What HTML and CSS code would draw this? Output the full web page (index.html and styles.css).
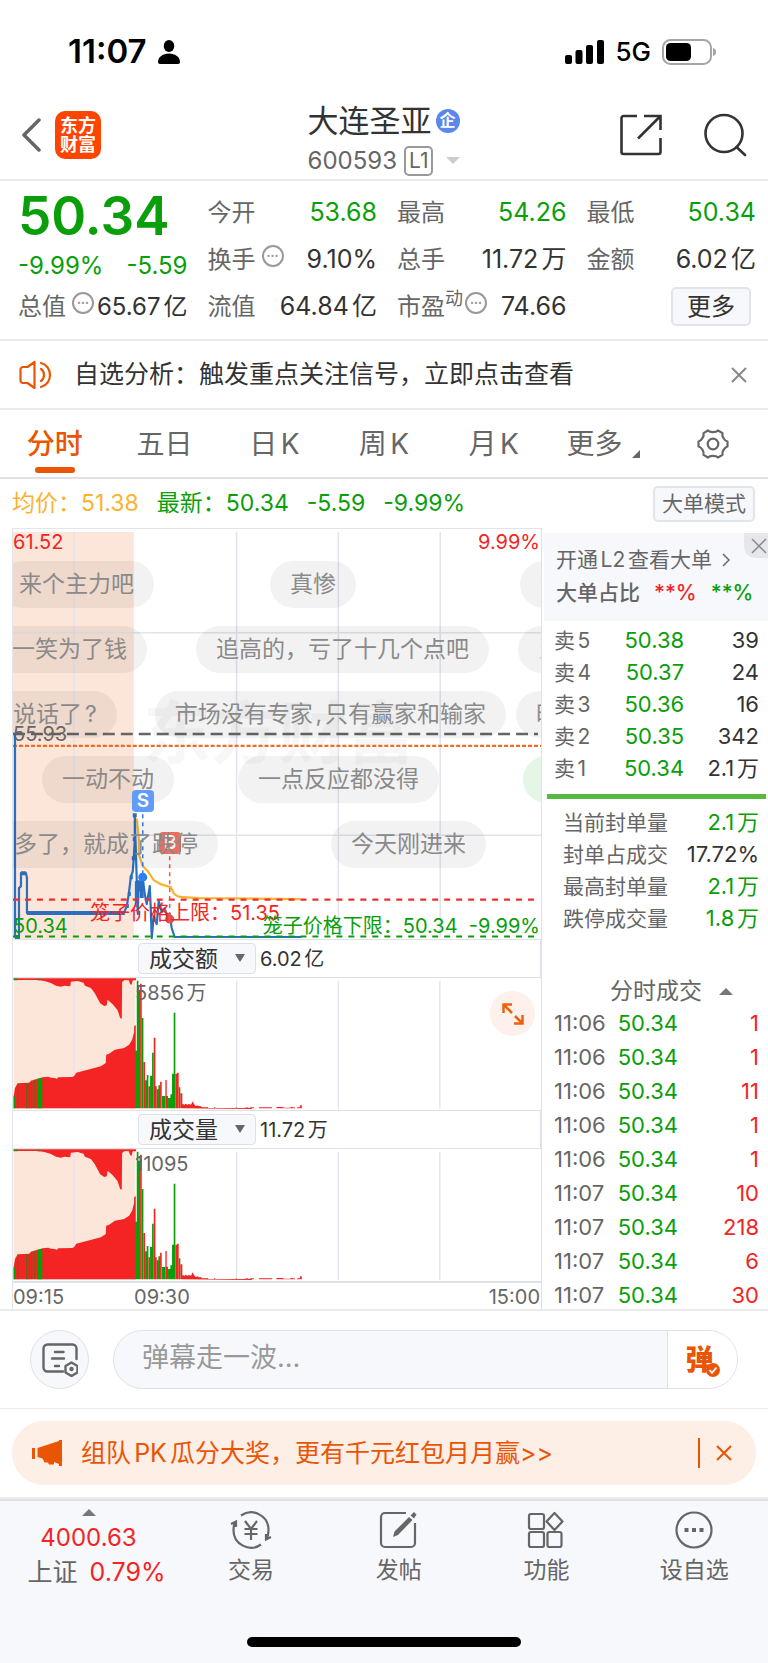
FILE: index.html
```html
<!DOCTYPE html>
<html lang="zh-CN">
<head>
    <meta charset="UTF-8">
    <meta name="viewport" content="width=device-width, initial-scale=1.0">
    <title>大连圣亚 600593</title>
    <link rel="stylesheet" href="styles.css">
</head>
<body>
    <div class="status-bar">
        <div class="status-left">
            <span class="clock">11:07</span>
            <svg width="22" height="24" viewBox="0 0 22 24"><ellipse cx="11" cy="6" rx="5.3" ry="6"/><path d="M0 22c0-5 5-8.5 11-8.5S22 17 22 22c0 1.200-.8 2-2 2H2c-1.200 0-2-.8-2-2z"/></svg>
        </div>
        <div class="status-right">
            <svg width="39" height="24" viewBox="0 0 39 24"><rect y="15" width="7" height="9" rx="2"/><rect x="10.500" y="10" width="7" height="14" rx="2"/><rect x="21" y="5" width="7" height="19" rx="2"/><rect x="32" width="7" height="24" rx="2"/></svg>
            <span class="network">5G</span>
            <svg width="54" height="26" viewBox="0 0 54 26"><rect x="1" y="1" width="48" height="24" rx="7.500" fill="none" stroke="#a6a6a6" stroke-width="2"/><rect x="4" y="4" width="25" height="18" rx="4.500"/><path d="M51 9c2 .6 3 2 3 4s-1 3.400-3 4z" fill="#a6a6a6"/></svg>
        </div>
    </div>

    <header class="header">
        <div class="header-side">
            <button class="icon-btn" aria-label="返回"><svg width="20" height="34" viewBox="0 0 20 34"><path d="M18 2 3 17l15 15" fill="none" stroke="#666" stroke-width="3.500" stroke-linecap="round" stroke-linejoin="round"/></svg></button>
            <a class="logo" href="#">东方<br>财富</a>
        </div>
        <div class="stock">
            <h1>大连圣亚<span class="badge">企</span></h1>
            <p>600593<span class="level">L1</span><i class="caret"></i></p>
        </div>
        <div class="header-side header-actions">
            <button class="icon-btn" aria-label="分享"><svg width="44" height="44" viewBox="0 0 44 44" fill="none" stroke="#333" stroke-width="2.600"><path d="M18 3H4.500A2 2 0 0 0 2.500 5v34a2 2 0 0 0 2 2h35a2 2 0 0 0 2-2V25M25 3h16.500v14M41 3.500 19 25.500"/></svg></button>
            <button class="icon-btn" aria-label="搜索"><svg width="44" height="44" viewBox="0 0 44 44" fill="none" stroke="#333" stroke-width="2.600"><circle cx="21" cy="20.500" r="18.500"/><path d="m33.500 34 8.500 8" stroke-linecap="round"/></svg></button>
        </div>
    </header>

    <section class="quote">
        <div class="price down">50.34</div>
        <div class="item"><span>今开</span><b class="down">53.68</b></div>
        <div class="item"><span>最高</span><b class="down">54.26</b></div>
        <div class="item"><span>最低</span><b class="down">50.34</b></div>
        <div class="item own change"><b class="down">-9.99%</b><b class="down">-5.59</b></div>
        <div class="item"><span>换手<i class="dots">•••</i></span><b>9.10%</b></div>
        <div class="item"><span>总手</span><b>11.72万</b></div>
        <div class="item"><span>金额</span><b>6.02亿</b></div>
        <div class="item own"><span>总值<i class="dots">•••</i></span><b>65.67亿</b></div>
        <div class="item"><span>流值</span><b>64.84亿</b></div>
        <div class="item"><span>市盈<sup>动</sup><i class="dots">•••</i></span><b>74.66</b></div>
        <div class="item item-more"><button class="more">更多</button></div>
    </section>

    <div class="notice">
        <svg width="34" height="30" viewBox="0 0 34 30" fill="none" stroke="#ea5504" stroke-width="2.200" stroke-linejoin="round" stroke-linecap="round"><path d="M15.500 2v26l-7-5H4a2.500 2.500 0 0 1-2.500-2.500v-11A2.500 2.500 0 0 1 4 7h4.500zM22 9c4 2.500 4 9.500 0 12M22 3c12 3 12 21 0 24"/></svg>
        <p>自选分析：触发重点关注信号，立即点击查看</p>
        <button class="icon-btn" aria-label="关闭"><svg width="16" height="16" viewBox="0 0 16 16"><path d="m1 1 14 14M15 1 1 15" stroke="#888" stroke-width="2"/></svg></button>
    </div>

    <nav class="tabs">
        <a class="active" href="#">分时</a>
        <a href="#">五日</a>
        <a href="#">日K</a>
        <a href="#">周K</a>
        <a href="#">月K</a>
        <a class="tab-more" href="#">更多</a>
        <a href="#" aria-label="设置"><svg width="32" height="32" viewBox="0 0 32 32" fill="none" stroke="#666" stroke-width="2.200" stroke-linejoin="round"><path d="M11 2.500c2 2.200 8 2.200 10 0l4.500 2.600c-.9 3 2 7.900 5 8.400v5c-3 .6-5.900 5.500-5 8.400L21 29.500c-2-2.200-8-2.200-10 0l-4.500-2.600c.9-3-2-7.900-5-8.400v-5c3-.6 5.900-5.500 5-8.400z"/><circle cx="16" cy="16" r="5.300"/></svg></a>
    </nav>

    <div class="summary">
        <span class="avg">均价：51.38</span>
        <span class="down">最新：50.34</span>
        <span class="down">-5.59</span>
        <span class="down">-9.99%</span>
        <button class="mode">大单模式</button>
    </div>

    <!-- grid, volume columns: shared by both lower charts -->
    <svg class="defs" width="0" height="0">
        <symbol id="volume" viewBox="36 140 1587 396" preserveAspectRatio="none">
            <path fill="#fce5d9" d="M38 142h366v390H38z"/>
            <path stroke="#e1e4eb" stroke-width="4" d="M219 148v384M708 148v384M1014 148v384M1319 148v384"/>
            <path fill="#f42424" d="M38 141H406V147L396 147L392 161L388 158L384 147L372 146L364 152L363 262L358 260L350 236L335 218L320 205L318 222L310 224L298 216L282 186L270 170L252 163L248 154L230 149L210 151L208 165L190 163L180 166L165 163L150 155L130 149L110 146L38 146Z"/>
            <path fill="#f42424" d="M38 531V495L42 470L50 456L85 454L90 448L108 443L125 438L142 436L150 439L162 440L167 443L172 438L214 437L220 434L226 424L300 405L315 395L316 370L325 367L342 355L370 350L385 340L394 325L400 302V285L405 281V531Z"/>
            <path fill="#0a9e0a" d="M38 142h12v5H38zM108 142h9v5h-9zM38 495h5v36h-5zM108 443l16-4v92h-16zM403 358h6v173h-6zM408 148h5v383h-5zM413 175h5v356h-5zM423 260h5v271h-5zM433 447h5v84h-5zM438 431h5v100h-5zM448 433h6v98h-6zM454 364h5v167h-5zM468 474h5v57h-5zM473 462h5v69h-5zM484 494h10v37h-10zM502 500h7v31h-7zM509 489h5v42h-5zM514 427h5v104h-5zM519 244h5v287h-5zM534 468h5v63h-5z"/>
            <path fill="#7d5a14" d="M75 455h7v76h-7zM84 454h3v77h-3zM91 448h3v83h-3zM100 445h3v86h-3zM49 457h3v74h-3z"/>
            <path fill="#f42424" d="M418 157h5v374h-5zM428 392h5v139h-5zM443 465h5v66h-5zM459 319h5v212h-5zM464 465h4v66h-4zM478 451h5v80h-5zM494 446h4v85h-4zM498 494h4v37h-4zM524 428h4v103h-4zM528 424h6v107h-6zM539 486h6v45h-6zM545 531v-12h6v3l4-5 5 3 5-2 6 2 5-10 4 8 5 6 8-2v3l6-1 6 4h10l5-1 4 3h16v-2h4v2h60l5-2v2h20l14-2v2h6v-2h5v5zM754 528h6v3h-6zM775 528h40v3h-40zM828 527h18l6 2h18v-2h8v2l6-1v3h-56zM890 528h8l1-6h5v9h-14z"/>
        </symbol>
    </svg>

    <main class="board">
        <div class="charts">
            <div class="price-chart">
                <svg class="plot" viewBox="0 0 529 411" preserveAspectRatio="none" fill="none">
                    <path fill="#fce5d9" d="M0 3h121v408H0z"/>
                    <path stroke="#e1e4eb" stroke-width="1.500" d="M61 3v406M224 3v406M326 3v406M428 3v406M0 104h529M122 307h407"/>
                </svg>
                <div class="watermark">东方财富</div>
                <svg class="plot" viewBox="0 0 529 411" preserveAspectRatio="none" fill="none">
                    <path stroke="#666" stroke-width="2.400" stroke-dasharray="12 6" d="M0 205.500h526"/>
                    <path stroke="#f06a20" stroke-width="2.200" stroke-dasharray="4 2" d="M0 217.500h529"/>
                    <path stroke="#fbb32f" stroke-width="2.200" d="M124 290 126 310V326L130 338 135 343 141 352 148 356 158 359 161 365Q164 369 170 369L188 370 288 371"/>
                    <path stroke="#2b6fbe" stroke-width="2.200" stroke-linejoin="round" d="M2 206V409H6V360L8 358V345H13L14 350V385H111L114 378 116 366 118 349 120 343 121 330 122 311V287L125 386 126 353 128 363 130 350 132 366 134 376 137 358 138 380 139 410 141 388 144 396 146 373 149 384 152 380 155 390 157 386 159 400 162 409H289"/>
                    <path stroke="#2b6fbe" stroke-width="4" d="M14 385h98M2 409h5M8 345h5M113 378h3M115 366h3M117 349h3M119 330h3M120 311h3M120 287h4M124 353v26M129 350v20"/>
                    <path stroke="#ec2f2f" stroke-width="2.200" stroke-dasharray="6 6" d="M0 371.500h526"/>
                    <path stroke="#0a9e0a" stroke-width="2.200" stroke-dasharray="6 6" d="M0 408.500h526"/>
                    <path stroke="#2f7ff0" stroke-width="1.500" stroke-dasharray="4 4" d="M130 286v60"/>
                    <path stroke="#ee5b4c" stroke-width="1.500" stroke-dasharray="4 4" d="M157 328v62"/>
                    <circle cx="130" cy="349" r="4.500" fill="#2f7ff0"/>
                    <circle cx="157" cy="391" r="4.500" fill="#e2524c"/>
                </svg>
                <span class="marker buy">B</span>
                <ul class="danmaku">
                    <li><span>来个主力吧</span><span>真惨</span><span>个</span></li>
                    <li><span>一笑为了钱</span><span>追高的，亏了十几个点吧</span><span>当</span></li>
                    <li><span>说话了?</span><span>市场没有专家,只有赢家和输家</span><span>时</span></li>
                    <li><span>一动不动</span><span>一点反应都没得</span><span class="mine">跌</span></li>
                    <li><span>多了，就成了跌停</span><span>今天刚进来</span></li>
                </ul>
                <span class="marker sell">S</span>
                <span class="label high up">61.52</span>
                <span class="label high-rate up">9.99%</span>
                <span class="label mid">55.93</span>
                <span class="label low down">50.34</span>
                <span class="label cap up">笼子价格上限：51.35</span>
                <span class="label floor down">笼子价格下限：50.34 &nbsp;-9.99%</span>
            </div>
            <div class="indicator">
                <span class="picker"><select aria-label="指标一"><option>成交额</option><option>成交量</option></select></span>
                <span>6.02亿</span>
            </div>
            <div class="volume-chart">
                <svg class="plot"><use href="#volume"/></svg>
                <span class="label peak">5856万</span>
                <button class="expand" aria-label="全屏"><svg width="24" height="24" viewBox="0 0 24 24" fill="none" stroke="#f0600c" stroke-width="2.500"><path d="M2.500 11V2.500H11M3 3l8 8M21.500 13v8.500H13M21 21l-7-7"/></svg></button>
            </div>
            <div class="indicator">
                <span class="picker"><select aria-label="指标二"><option>成交量</option><option>成交额</option></select></span>
                <span>11.72万</span>
            </div>
            <div class="volume-chart">
                <svg class="plot"><use href="#volume"/></svg>
                <span class="label peak">11095</span>
            </div>
            <div class="axis"><span>09:15</span><span class="open">09:30</span><span>15:00</span></div>
        </div>

        <aside class="sidebar">
            <div class="level2">
                <button class="close" aria-label="关闭"><svg width="16" height="16" viewBox="0 0 16 16"><path d="m1 1 14 14M15 1 1 15" stroke="#888" stroke-width="1.500"/></svg></button>
                <a href="#">开通L2查看大单<svg width="8" height="14" viewBox="0 0 8 14"><path d="m1 1 6 6-6 6" fill="none" stroke="#666" stroke-width="1.500"/></svg></a>
                <p><span>大单占比</span><b class="up">**%</b><b class="down">**%</b></p>
            </div>
            <table class="orders">
                <tr><th>卖5</th><td class="down">50.38</td><td>39</td></tr>
                <tr><th>卖4</th><td class="down">50.37</td><td>24</td></tr>
                <tr><th>卖3</th><td class="down">50.36</td><td>16</td></tr>
                <tr><th>卖2</th><td class="down">50.35</td><td>342</td></tr>
                <tr><th>卖1</th><td class="down">50.34</td><td>2.1万</td></tr>
            </table>
            <div class="ratio"></div>
            <table class="sealed">
                <tr><th>当前封单量</th><td class="down">2.1万</td></tr>
                <tr><th>封单占成交</th><td>17.72%</td></tr>
                <tr><th>最高封单量</th><td class="down">2.1万</td></tr>
                <tr><th>跌停成交量</th><td class="down">1.8万</td></tr>
            </table>
            <h2>分时成交<i class="caret-up"></i></h2>
            <table class="ticks">
                <tr><th>11:06</th><td class="down">50.34</td><td class="up">1</td></tr>
                <tr><th>11:06</th><td class="down">50.34</td><td class="up">1</td></tr>
                <tr><th>11:06</th><td class="down">50.34</td><td class="up">11</td></tr>
                <tr><th>11:06</th><td class="down">50.34</td><td class="up">1</td></tr>
                <tr><th>11:06</th><td class="down">50.34</td><td class="up">1</td></tr>
                <tr><th>11:07</th><td class="down">50.34</td><td class="up">10</td></tr>
                <tr><th>11:07</th><td class="down">50.34</td><td class="up">218</td></tr>
                <tr><th>11:07</th><td class="down">50.34</td><td class="up">6</td></tr>
                <tr><th>11:07</th><td class="down">50.34</td><td class="up">30</td></tr>
            </table>
        </aside>
    </main>

    <form class="comment">
        <button type="button" class="round" aria-label="弹幕设置"><svg width="36" height="34" viewBox="0 0 36 34" fill="none" stroke="#666" stroke-width="2.400" stroke-linecap="round"><path d="M21 28.500H5.500a4 4 0 0 1-4-4V5.500a4 4 0 0 1 4-4h25a4 4 0 0 1 4 4V16M13 9h8.500M10 15.500h12M13 23h4"/><path d="m29.500 19.500 6 3.500v6.500l-6 3.500-6-3.500V23z" stroke-linejoin="round"/><circle cx="29.500" cy="26" r="1" /></svg></button>
        <div class="field">
            <input type="text" aria-label="弹幕" placeholder="弹幕走一波...">
            <button type="button" class="danmu-btn" aria-label="弹幕开关">弹<svg width="14" height="14" viewBox="0 0 14 14"><circle cx="7" cy="7" r="7" fill="#ea5504"/><path d="m3.500 7 2.500 2.800L10.500 4.500" fill="none" stroke="#fff" stroke-width="1.800"/></svg></button>
        </div>
    </form>

    <div class="promo-wrap">
        <div class="promo">
            <svg width="30" height="26" viewBox="0 0 30 26" fill="#ea5504"><path d="M0 8h3v11H0zM5.500 8 27 1V0h3v26h-3v-2l-5-2v2.500h-5l-1-2h-3.500l-2-4-5-1.500z"/></svg>
            <a href="#">组队PK瓜分大奖，更有千元红包月月赢&gt;&gt;</a>
            <button class="icon-btn" aria-label="关闭"><svg width="16" height="16" viewBox="0 0 16 16"><path d="m1 1 14 14M15 1 1 15" stroke="#ea5504" stroke-width="2"/></svg></button>
        </div>
    </div>

    <footer class="bottom">
        <a class="index" href="#">
            <i class="caret-up"></i>
            <b class="up">4000.63</b>
            <span>上证<b class="up">0.79%</b></span>
        </a>
        <a href="#">
            <svg width="42" height="38" viewBox="0 0 42 38" fill="none" stroke="#666" stroke-width="2.200"><path d="M11 4.500A17.500 17.500 0 0 1 38.500 19c0 3-.5 6-1.500 8M1 13l5-2.500V16M31 33.500A17.500 17.500 0 0 1 3.500 19c0-3 .5-5.500 1.500-8M41 26l-5 2.500V23M15 10l6 8 6-8M14.500 18h13M14.500 23h13M21 18v11"/></svg>
            <span>交易</span>
        </a>
        <a href="#">
            <svg width="42" height="38" viewBox="0 0 42 38" fill="none" stroke="#666" stroke-width="2.200"><path d="M28 2H7a4 4 0 0 0-4 4v26a4 4 0 0 0 4 4h26a4 4 0 0 0 4-4V12"/><path fill="#666" stroke="none" d="m31 6 3.500 3L20 24l-5 2 1.500-5.500zM32.500 4.500 36 1l2.500 2.500L36 7.500z"/></svg>
            <span>发帖</span>
        </a>
        <a href="#">
            <svg width="42" height="38" viewBox="0 0 42 38" fill="none" stroke="#666" stroke-width="2.200" stroke-linejoin="round"><rect x="4" y="3" width="15" height="15" rx="2"/><rect x="4" y="21" width="15" height="15" rx="2"/><rect x="22.500" y="21" width="14" height="15" rx="2"/><path d="m29.500 2 8 8.500-8 8.500-8-8.500z"/></svg>
            <span>功能</span>
        </a>
        <a href="#">
            <svg width="42" height="38" viewBox="0 0 42 38" fill="none" stroke="#666" stroke-width="2.200"><circle cx="21" cy="19" r="17.500"/><path d="M11.500 19h4M19 19h4M26.500 19h4" stroke-width="4"/></svg>
            <span>设自选</span>
        </a>
        <div class="home-bar"></div>
    </footer>
</body>
</html>
```

FILE: styles.css
```css
body {
    margin: 0;
    background-color: #ffffff;
    color: #333333;
    font-family: Inter, "Noto Sans CJK SC", sans-serif;
    font-size: 24px;
    line-height: 1;
    text-autospace: normal;
}

* {
    box-sizing: border-box;
}

h1, h2, p, ul {
    margin: 0;
    padding: 0;
    font-weight: 400;
}

a {
    color: inherit;
    text-decoration: none;
}

b, i, th {
    font-weight: 400;
    font-style: normal;
}

svg {
    display: block;
    flex-shrink: 0;
}

button, input, select {
    font: inherit;
    color: inherit;
    padding: 0;
    border: none;
    background: none;
}

.icon-btn {
    display: flex;
    cursor: pointer;
}

.up {
    color: #f42424;
}

.down {
    color: #0a9e0a;
}

.defs {
    position: absolute;
}

/* status bar */
.status-bar {
    display: flex;
    justify-content: space-between;
    align-items: center;
    height: 90px;
    padding: 13px 52px 0 68px;
}

.status-left, .status-right {
    display: flex;
    align-items: center;
    gap: 11px;
    color: #000000;
}

.clock {
    font-size: 33px;
    font-weight: 600;
}

.network {
    font-size: 26px;
    font-weight: 500;
}

/* header */
.header {
    display: flex;
    justify-content: space-between;
    align-items: center;
    height: 91px;
    padding: 0 21px;
    border-bottom: 2px solid #ebebeb;
}

.header-side {
    display: flex;
    align-items: center;
    flex: 1;
    gap: 14px;
}

.header-actions {
    justify-content: flex-end;
    gap: 40px;
}

.logo {
    padding: 5px;
    border-radius: 10px;
    background-color: #ff4400;
    color: #ffffff;
    font-size: 18px;
    font-weight: 700;
    line-height: 19px;
}

.stock {
    padding-top: 12px;
}

.stock h1 {
    display: flex;
    align-items: center;
    gap: 4px;
    font-size: 31px;
    line-height: 40px;
}

.badge {
    width: 24px;
    height: 24px;
    border-radius: 50%;
    background-color: #5b87ea;
    color: #ffffff;
    font-size: 16px;
    font-weight: 700;
    line-height: 23px;
    text-align: center;
}

.stock p {
    display: flex;
    align-items: center;
    font-size: 24px;
    line-height: 40px;
    color: #666666;
}

.level {
    margin: 0 13px 0 7px;
    padding: 0 3px;
    border: 2px solid #999999;
    border-radius: 5px;
    font-size: 21px;
    line-height: 26px;
}

.caret {
    border: 7px solid transparent;
    border-top-color: #cccccc;
    border-bottom: none;
}

.caret-up {
    border: 7px solid transparent;
    border-bottom-color: #777777;
    border-top: none;
}

/* quote */
.quote {
    display: grid;
    grid-template-columns: repeat(4, 1fr);
    grid-auto-rows: 47px;
    column-gap: 20px;
    padding: 8px 12px 9px 18px;
    border-bottom: 2px solid #ebebeb;
}

.price {
    font-size: 53px;
    font-weight: 600;
    line-height: 54px;
}

.item {
    display: flex;
    justify-content: space-between;
    align-items: center;
    white-space: nowrap;
}

.item span {
    display: flex;
    align-items: center;
    color: #666666;
}

.item b {
    font-size: 25px;
}

.own b {
    font-size: 24px;
}

.change {
    padding-top: 12px;
}

.item sup {
    align-self: flex-start;
    font-size: 18px;
    line-height: 14px;
}

.dots {
    width: 22px;
    height: 22px;
    margin: 0 0 8px 6px;
    border: 2px solid #999999;
    border-radius: 50%;
    color: #999999;
    font-size: 7px;
    line-height: 18px;
    text-align: center;
}

.item sup + .dots {
    margin-left: 2px;
}

.item-more {
    justify-content: flex-end;
}

.more, .mode {
    border: 2px solid #e1e4eb;
    border-radius: 5px;
    background-color: #f7f8fb;
    cursor: pointer;
}

.more {
    width: 80px;
    height: 39px;
    margin-right: 5px;
}

/* notice */
.notice {
    display: flex;
    align-items: center;
    gap: 21px;
    height: 69px;
    padding: 0 21px 0 19px;
    border-bottom: 2px solid #ebebeb;
}

.notice p {
    flex: 1;
    font-size: 25px;
}

/* tabs */
.tabs {
    display: flex;
    height: 69px;
    border-bottom: 2px solid #dfe1e8;
}

.tabs a {
    display: flex;
    flex: 1;
    justify-content: center;
    align-items: center;
    font-size: 28px;
    color: #666666;
}

.tabs .active {
    position: relative;
    color: #ea5504;
    font-weight: 500;
}

.tabs .active::after {
    content: "";
    position: absolute;
    bottom: 4px;
    width: 40px;
    height: 6px;
    border-radius: 3px;
    background-color: #ea5504;
}

.tab-more::after {
    content: "";
    align-self: flex-end;
    margin: 0 0 19px 10px;
    border: 4px solid #666666;
    border-top-color: transparent;
    border-left-color: transparent;
}

/* latest price */
.summary {
    display: flex;
    align-items: center;
    gap: 18px;
    height: 49px;
    padding: 0 13px 0 12px;
    font-size: 23px;
}

.avg {
    color: #fbb32f;
}

.mode {
    height: 36px;
    margin-left: auto;
    padding: 0 7px;
    font-size: 21px;
    color: #666666;
}

/* charts */
.board {
    display: flex;
    padding-left: 12px;
    border-bottom: 2px solid #ebebeb;
}

.charts {
    flex: 1;
    min-width: 0;
    border-top: 1px solid #e1e4eb;
    border-left: 1px solid #e1e4eb;
}

.price-chart, .volume-chart {
    position: relative;
    overflow: hidden;
}

.price-chart {
    height: 410px;
}

.volume-chart {
    height: 132px;
}

.plot {
    position: absolute;
    top: 0;
    left: 0;
    width: 100%;
    height: 100%;
}

.watermark {
    position: absolute;
    top: 170px;
    left: 130px;
    color: rgba(0, 0, 0, 0.03);
    font-size: 68px;
    font-weight: 700;
}

.label {
    position: absolute;
    font-size: 20px;
    line-height: 22px;
    white-space: nowrap;
}

.high {
    top: 2px;
    left: 0;
}

.high-rate {
    top: 2px;
    right: 1px;
}

.mid {
    top: 194px;
    left: 0;
    color: #666666;
}

.low {
    top: 386px;
    left: 0;
}

.cap {
    top: 373px;
    left: 77px;
}

.floor {
    top: 386px;
    right: 1px;
}

.peak {
    top: 4px;
    left: 122px;
    color: #666666;
}

.marker {
    position: absolute;
    width: 22px;
    height: 22px;
    border-radius: 4px;
    color: #ffffff;
    font-size: 19px;
    font-weight: 600;
    line-height: 22px;
    text-align: center;
}

.sell {
    top: 261px;
    left: 119px;
    background-color: #5f9df9;
}

.buy {
    top: 303px;
    left: 146px;
    background-color: #f57565;
}

/* scrolling comments, one list item per track */
.danmaku {
    position: absolute;
    top: 32px;
    left: 0;
    width: 100%;
    list-style: none;
    color: #8a8a8a;
    font-size: 23px;
}

.danmaku li {
    position: relative;
    display: flex;
    height: 47px;
    margin-bottom: 18px;
}

.danmaku span {
    flex-shrink: 0;
    padding: 0 20px;
    border-radius: 24px;
    background-color: rgba(0, 0, 0, 0.05);
    line-height: 46px;
    white-space: nowrap;
}

.danmaku .mine {
    background-color: #e5f5e6;
    color: #0a9e0a;
}

.danmaku li:nth-child(1) {
    gap: 116px;
    margin-left: -14px;
}

.danmaku li:nth-child(1) span:last-child {
    margin-left: 48px;
}

.danmaku li:nth-child(2) {
    gap: 49px;
    margin-left: -21px;
}

.danmaku li:nth-child(2) span:last-child {
    margin-left: -20px;
}

.danmaku li:nth-child(3) {
    gap: 38px;
    margin-left: -20px;
}

.danmaku li:nth-child(3) span:last-child {
    margin-left: -28px;
}

.danmaku li:nth-child(4) {
    gap: 64px;
    margin-left: 29px;
}

.danmaku li:nth-child(4) span:last-child {
    margin-left: 20px;
}

.danmaku li:nth-child(5) {
    gap: 113px;
    margin-left: -19px;
}

.indicator {
    display: flex;
    align-items: center;
    gap: 4px;
    height: 39px;
    padding-left: 125px;
    border: 1px solid #dfe1e8;
    border-left: none;
    font-size: 20px;
}

.picker {
    position: relative;
}

.picker select {
    display: block;
    appearance: none;
    width: 118px;
    height: 31px;
    padding-left: 10px;
    border: 1px solid #dfe1e8;
    border-radius: 4px;
    background-color: #f7f8fb;
    font-size: 23px;
    line-height: 28px;
}

.picker::after {
    content: "";
    position: absolute;
    top: 11px;
    right: 11px;
    border: 5px solid transparent;
    border-top: 8px solid #666666;
    border-bottom: none;
}

.expand {
    position: absolute;
    top: 13px;
    right: 6px;
    display: flex;
    justify-content: center;
    align-items: center;
    width: 45px;
    height: 45px;
    border-radius: 50%;
    background-color: #fef0ea;
    cursor: pointer;
}

.axis {
    display: flex;
    justify-content: space-between;
    height: 28px;
    padding-right: 1px;
    border-top: 2px solid #dfe1e8;
    color: #666666;
    font-size: 20px;
    line-height: 28px;
}

.axis .open {
    margin-right: auto;
    margin-left: 70px;
}

/* order book */
.sidebar {
    flex-shrink: 0;
    width: 227px;
    border-left: 1px solid #dfe1e8;
    font-size: 21px;
}

.level2 {
    position: relative;
    height: 88px;
    margin: 5px 0 3px 2px;
    padding: 10px 0 0 12px;
    background-color: #f7f8fb;
    color: #666666;
}

.level2 a {
    display: flex;
    align-items: center;
    gap: 10px;
    line-height: 34px;
}

.level2 p {
    display: flex;
    gap: 14px;
    font-weight: 500;
    line-height: 32px;
}

.level2 b {
    font-weight: 500;
}

.close {
    position: absolute;
    top: 0;
    right: 0;
    display: flex;
    justify-content: center;
    align-items: center;
    width: 24px;
    height: 25px;
    padding-left: 6px;
    border-bottom-left-radius: 12px;
    background-color: #e6e7ea;
    cursor: pointer;
}

.sidebar table {
    width: 100%;
    border-collapse: collapse;
}

.sidebar th, .sidebar td {
    height: 32px;
    padding: 0;
    text-align: right;
    white-space: nowrap;
}

.sidebar th {
    padding-left: 12px;
    color: #666666;
    text-align: left;
}

.sidebar td {
    font-size: 22px;
}

.sidebar td:last-child {
    padding-right: 9px;
}

.orders td:nth-child(2) {
    width: 74px;
}

.ratio {
    height: 5px;
    margin: 10px 2px 7px 5px;
    background-color: #58b940;
}

.sidebar .sealed th {
    padding-left: 21px;
}

.sidebar h2 {
    display: flex;
    justify-content: flex-end;
    align-items: center;
    gap: 17px;
    height: 30px;
    margin: 42px 35px 0 0;
    font-size: 23px;
    color: #666666;
}

/* the last row runs into the panel edge */
.ticks {
    margin-bottom: -6px;
}

.sidebar .ticks th, .sidebar .ticks td {
    height: 34px;
    font-size: 22px;
}

.ticks td:last-child {
    width: 90px;
}

/* comment box */
.comment {
    display: flex;
    align-items: center;
    gap: 24px;
    height: 98px;
    padding: 0 30px;
    border-bottom: 1px solid #ebebeb;
}

.round, .field {
    height: 59px;
    border: 1px solid #dfe1e8;
    border-radius: 30px;
    background-color: #f7f8fb;
}

.round {
    display: flex;
    justify-content: center;
    align-items: center;
    width: 59px;
}

.field {
    display: flex;
    flex: 1;
    overflow: hidden;
}

.field input {
    flex: 1;
    min-width: 0;
    padding: 0 28px 4px;
    outline: none;
    font-size: 27px;
    text-autospace: no-autospace;
}

.field input::placeholder {
    color: #999999;
}

.danmu-btn {
    position: relative;
    width: 70px;
    padding-right: 6px;
    border-left: 1px solid #dfe1e8;
    background-color: #ffffff;
    color: #ea5504;
    font-size: 28px;
    font-weight: 900;
    line-height: 50px;
}

.danmu-btn svg {
    position: absolute;
    right: 17px;
    bottom: 11px;
}

/* promo */
.promo-wrap {
    padding: 12px;
    border-bottom: 2px solid #ebebeb;
}

.promo {
    display: flex;
    align-items: center;
    gap: 19px;
    height: 64px;
    padding: 0 24px 0 20px;
    border-radius: 32px;
    background-color: #fdeee6;
    color: #ea5504;
    font-size: 25px;
}

.promo a {
    flex: 1;
}

.promo .icon-btn {
    padding: 7px 0 7px 16px;
    border-left: 2px solid #ea5504;
}

/* bottom bar */
.bottom {
    display: grid;
    grid-template-columns: 177px repeat(4, 1fr);
    padding-bottom: 17px;
    border-top: 2px solid #dfe1e5;
    background-color: #f7f8fb;
    color: #666666;
}

.bottom a {
    display: flex;
    flex-direction: column;
    align-items: center;
    gap: 9px;
    height: 136px;
    padding-top: 10px;
    font-size: 23px;
    line-height: 24px;
}

.bottom .index {
    gap: 10px;
    padding-top: 8px;
    font-size: 24px;
}

.index span {
    display: flex;
    gap: 12px;
    padding-left: 16px;
    font-size: 25px;
}

.home-bar {
    grid-column: 1 / -1;
    justify-self: center;
    width: 274px;
    height: 10px;
    border-radius: 5px;
    background-color: #000000;
}
```
